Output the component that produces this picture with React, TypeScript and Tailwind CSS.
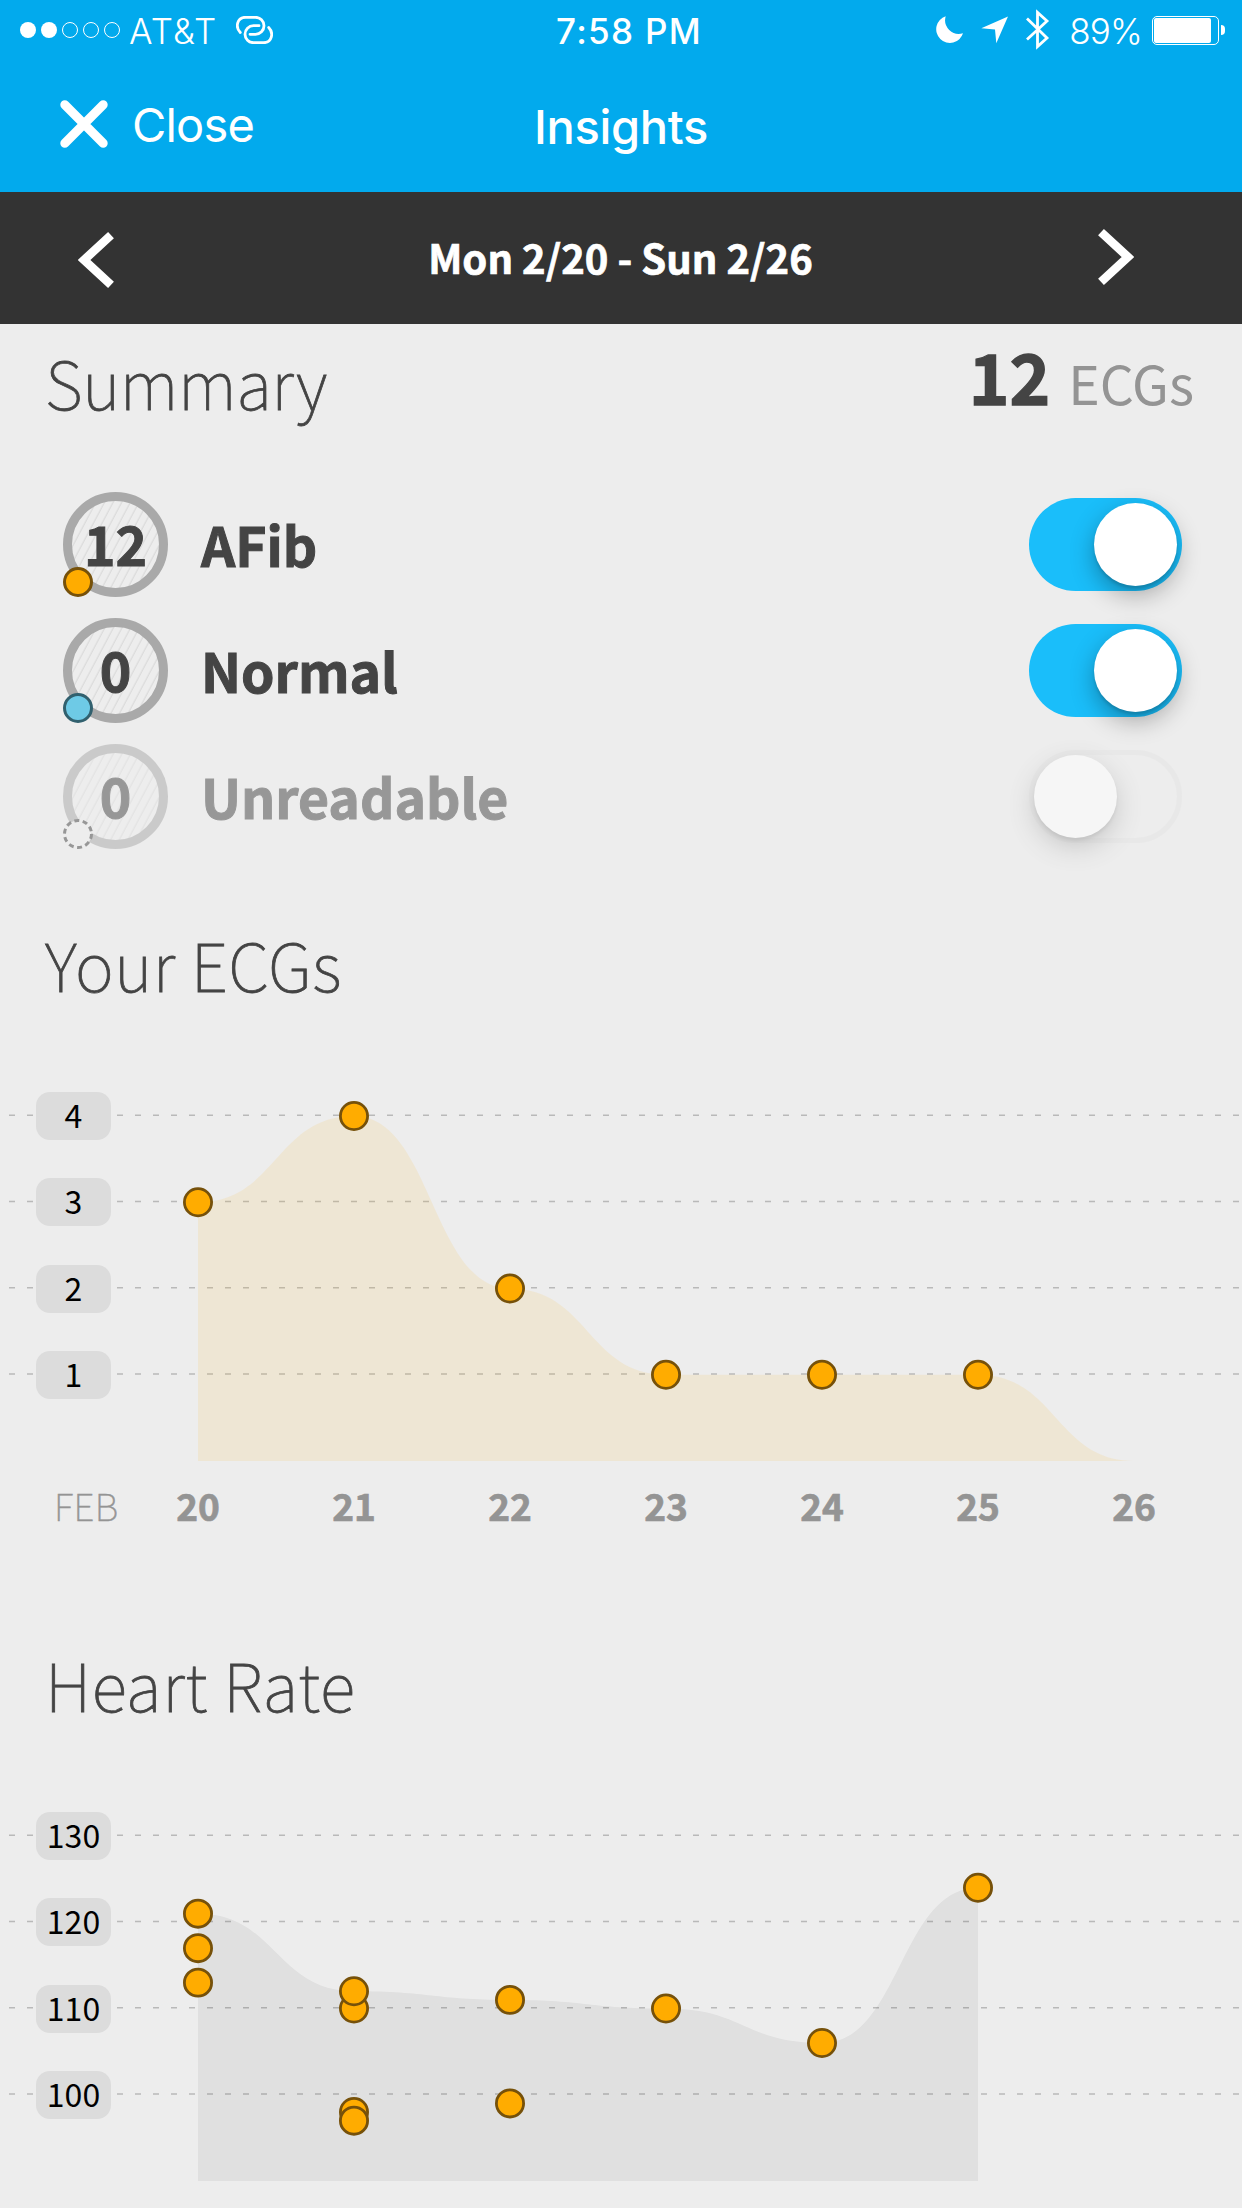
import type { ReactNode } from 'react';

const FIRST_DAY = 20;
const DAYS = [20, 21, 22, 23, 24, 25, 26];

interface Reading {
  day: number;
  value: number;
}

const ecgCounts: Reading[] = [
  { day: 20, value: 3 },
  { day: 21, value: 4 },
  { day: 22, value: 2 },
  { day: 23, value: 1 },
  { day: 24, value: 1 },
  { day: 25, value: 1 },
];

const heartRates: Reading[] = [
  { day: 20, value: 113 },
  { day: 20, value: 117 },
  { day: 20, value: 121 },
  { day: 21, value: 110 },
  { day: 21, value: 112 },
  { day: 21, value: 98 },
  { day: 21, value: 97 },
  { day: 22, value: 111 },
  { day: 22, value: 99 },
  { day: 23, value: 110 },
  { day: 24, value: 106 },
  { day: 25, value: 124 },
];

const maxHeartRates: Reading[] = [
  { day: 20, value: 121 },
  { day: 21, value: 112 },
  { day: 22, value: 111 },
  { day: 23, value: 110 },
  { day: 24, value: 106 },
  { day: 25, value: 124 },
];

const StatusBar = () => (
  <div className="grid h-[60px] grid-cols-[1fr_auto_1fr] items-center pl-5 pr-[17px] font-[Inter,sans-serif] text-[35px] leading-none">
    <div className="flex items-center">
      <div className="flex gap-[5px]">
        <span className="size-4 rounded-full bg-white" />
        <span className="size-4 rounded-full bg-white" />
        <span className="size-4 rounded-full border border-white" />
        <span className="size-4 rounded-full border border-white" />
        <span className="size-4 rounded-full border border-white" />
      </div>
      <span className="ml-[9px] mt-[3px] font-[350] tracking-[1.2px]">AT&amp;T</span>
      <svg className="ml-[18px] h-7 w-[37px]" viewBox="237 16 37 28" fill="none" stroke="currentColor" strokeWidth="2.8">
        <path d="M241.3 32.5C236 27 238 17.3 246.5 17.3H256.5A8.5 8.5 0 0 1 256.5 34.3H251" strokeLinecap="round" />
        <path d="M269.7 27.5C275 33 273 42.7 264.5 42.7H254.5A8.5 8.5 0 0 1 254.5 25.7H260" strokeLinecap="round" />
      </svg>
    </div>
    <span className="ml-[13px] mt-[3px] font-medium tracking-[1.3px]">7:58 PM</span>
    <div className="flex items-center justify-end">
      <svg className="h-7 w-7" viewBox="936 17 28 28" fill="currentColor">
        <path d="M945.7 17.2A13.7 13.7 0 1 0 963 34.3A13.8 13.8 0 0 1 945.7 17.2Z" />
      </svg>
      <svg className="ml-[17px] h-7 w-7" viewBox="981 17.5 28 28" fill="currentColor">
        <path d="M1008 18L981.3 29.7L995 31L996.3 44.7Z" />
      </svg>
      <svg className="ml-[17px] h-[42px] w-6" viewBox="1026 10 24 42" fill="none" stroke="currentColor" strokeWidth="2.8">
        <path d="M1027 19.5L1047 39L1037.5 47.6V13.5L1047 22L1027 40.5" />
      </svg>
      <span className="ml-[19px] mt-[3px] font-[350] tracking-[-0.8px]">89%</span>
      <div className="ml-[10px] flex items-center gap-[2px]">
        <div className="h-[29px] w-[67px] rounded-[5px] border border-white p-px">
          <div className="h-full w-[57px] rounded-[2px] bg-white" />
        </div>
        <span className="h-[10px] w-1 rounded-r-full bg-white" />
      </div>
    </div>
  </div>
);

const NavBar = () => (
  <div className="grid h-[132px] grid-cols-[1fr_auto_1fr] items-start px-[60px] font-[Inter,sans-serif] text-[47px] leading-[60px]">
    <button className="flex items-start pt-[36px] tracking-[-0.8px]">
      <svg className="mt-1 size-12" viewBox="0 0 48 48" stroke="currentColor" strokeWidth="9" strokeLinecap="round">
        <path d="M4.8 4.8L43.2 43.2M43.2 4.8L4.8 43.2" />
      </svg>
      <span className="ml-6 mt-[-1px]">Close</span>
    </button>
    <h1 className="pt-[37px] font-medium tracking-[-0.3px]">Insights</h1>
  </div>
);

const WeekPicker = () => (
  <div className="flex h-[132px] items-center justify-between bg-[#333] pl-[78px] pr-[108px] text-white">
    <button aria-label="Previous week">
      <svg className="mt-1 h-14 w-9" viewBox="0 0 36 56" fill="none" stroke="currentColor" strokeWidth="8.6">
        <path d="M33 3.2L6 28L33 52.8" />
      </svg>
    </button>
    <span className="ml-[29px] mt-[-2px] text-[40px] font-bold leading-[56px] [-webkit-text-stroke:0.7px]">
      Mon 2/20 - Sun 2/26
    </span>
    <button aria-label="Next week">
      <svg className="mt-[-2px] h-14 w-9" viewBox="0 0 36 56" fill="none" stroke="currentColor" strokeWidth="8.6">
        <path d="M3 3.2L30 28L3 52.8" />
      </svg>
    </button>
  </div>
);

const Toggle = ({ on }: { on: boolean }) => (
  <span
    className={
      on
        ? 'flex h-[93px] w-[153px] items-center justify-end rounded-full bg-[#1abefa] p-[5px]'
        : 'flex h-[93px] w-[153px] items-center rounded-full border-[5px] border-[#e5e5e5]'
    }
  >
    <span className="size-[83px] rounded-full bg-white shadow-[0_9px_24px_rgba(0,0,0,0.3),0_3px_3px_rgba(0,0,0,0.12)]" />
  </span>
);

interface SummaryRowProps {
  count: number;
  label: string;
  on: boolean;
  marker: ReactNode;
}

const SummaryRow = ({ count, label, on, marker }: SummaryRowProps) => (
  <div className={on ? 'flex h-[126px] items-start' : 'flex h-[126px] items-start opacity-50'}>
    <div className="relative flex size-[105px] items-center justify-center">
      <svg className="absolute inset-0" viewBox="0 0 105 105" fill="none">
        <defs>
          <pattern id="hatch" width="8.6" height="105" patternUnits="userSpaceOnUse" patternTransform="skewX(-28)">
            <path d="M4 0V105" stroke="#d6d6d6" strokeWidth="1.1" />
          </pattern>
        </defs>
        <circle cx="52.5" cy="52.5" r="48" fill="url(#hatch)" stroke="#a9a9a9" strokeWidth="9" />
        {marker}
      </svg>
      <span className="relative mt-[-3px] text-[53.5px] font-bold leading-[60px] [-webkit-text-stroke:1px]">
        {count}
      </span>
    </div>
    <span className="ml-[33px] mt-[22px] flex-1 text-[53.5px] font-bold leading-[60px] [-webkit-text-stroke:1px]">
      {label}
    </span>
    <div className="mt-[6px]">
      <Toggle on={on} />
    </div>
  </div>
);

interface ChartProps {
  ticks: number[];
  unit: number;
  area: Reading[];
  points: Reading[];
  areaClass: string;
}

const Chart = ({ ticks, unit, area, points, areaClass }: ChartProps) => {
  const x = (day: number) => 198 + (day - FIRST_DAY) * 156;
  const y = (value: number) => 24 + (ticks[0] - value) * unit;
  const base = 24 + 345;

  // Ease in and out of every reading, with flat tangents
  const curve = area
    .map((p, i) => {
      if (i === 0) return `L${x(p.day)} ${y(p.value)}`;
      const prev = area[i - 1];
      const mid = (x(prev.day) + x(p.day)) / 2;
      return `C${mid} ${y(prev.value)} ${mid} ${y(p.value)} ${x(p.day)} ${y(p.value)}`;
    })
    .join('');
  const last = area[area.length - 1];

  return (
    <div className="relative h-[369px]">
      <svg className="absolute inset-0 h-[369px] w-[1242px]" viewBox="0 0 1242 369" fill="none">
        {ticks.map((tick) => (
          <path
            key={tick}
            d={`M9 ${y(tick) - 0.8}H1242`}
            stroke="#b9b9b9"
            strokeWidth="1.5"
            strokeDasharray="6 12"
          />
        ))}
        <path className={areaClass} d={`M${x(FIRST_DAY)} ${base}${curve}L${x(last.day)} ${base}Z`} />
        {points.map((p, i) => (
          <circle key={i} cx={x(p.day)} cy={y(p.value)} r="13.6" fill="#ffac00" stroke="#76510a" strokeWidth="2.8" />
        ))}
      </svg>
      <div className="relative flex flex-col gap-[38.25px] pl-9">
        {ticks.map((tick) => (
          <span
            key={tick}
            className="h-12 w-[75px] rounded-[14px] bg-[#dcdcdc] text-center text-[32px] leading-[45px] text-black"
          >
            {tick}
          </span>
        ))}
      </div>
    </div>
  );
};

interface SectionTitleProps {
  children: ReactNode;
  className: string;
}

const SectionTitle = ({ children, className }: SectionTitleProps) => (
  <h2 className={`text-[66px] font-thin leading-[72px] [-webkit-text-stroke:0.8px] ${className}`}>{children}</h2>
);

const App = () => {
  return (
    <div className="h-[2208px] w-[1242px] overflow-hidden bg-[#ededed] font-['Noto_Sans_CJK_SC',sans-serif] text-[#444]">
      <header className="bg-[#02aaed] text-white">
        <StatusBar />
        <NavBar />
      </header>
      <WeekPicker />

      <section>
        <div className="flex h-[93px] items-start justify-between pl-[45px] pr-[48px] pt-[21px]">
          <SectionTitle className="tracking-[-0.4px]">Summary</SectionTitle>
          <div className="mt-[-6px] flex items-baseline gap-[18px] leading-[72px]">
            <span className="text-[69px] font-bold [-webkit-text-stroke:1.4px]">12</span>
            <span className="text-[53.5px] text-[#949494]">ECGs</span>
          </div>
        </div>
        <div className="pl-[63px] pr-[60px] pt-[75px]">
          <SummaryRow
            count={12}
            label="AFib"
            on
            marker={<circle cx="15" cy="90" r="13.5" fill="#ffac00" stroke="#76510a" strokeWidth="3" />}
          />
          <SummaryRow
            count={0}
            label="Normal"
            on
            marker={<circle cx="15" cy="90" r="13.5" fill="#6ecae6" stroke="#31606e" strokeWidth="3" />}
          />
          <SummaryRow
            count={0}
            label="Unreadable"
            on={false}
            marker={
              <circle cx="15" cy="90" r="13.5" fill="#ededed" stroke="#444" strokeWidth="3" strokeDasharray="5 3.5" />
            }
          />
        </div>
      </section>

      <section className="pt-[57px]">
        <div className="pl-[45px]">
          <SectionTitle className="tracking-[0.5px]">Your ECGs</SectionTitle>
        </div>
        <div className="pt-[93px]">
          <Chart
            ticks={[4, 3, 2, 1]}
            unit={86.25}
            area={[...ecgCounts, { day: 26, value: 0 }]}
            points={ecgCounts}
            areaClass="fill-[#ffac00]/10"
          />
        </div>
        <div className="flex h-[72px] pt-[17px] text-[37px] leading-[54px] text-[#949494]">
          <span className="w-[120px] pl-[54px] font-thin tracking-[0.4px] [-webkit-text-stroke:0.5px]">FEB</span>
          {DAYS.map((day) => (
            <span key={day} className="w-[156px] text-center font-bold [-webkit-text-stroke:0.7px]">
              {day}
            </span>
          ))}
        </div>
      </section>

      <section className="pt-[114px]">
        <div className="pl-[45px]">
          <SectionTitle className="tracking-[0.7px]">Heart Rate</SectionTitle>
        </div>
        <div className="pt-[93px]">
          <Chart
            ticks={[130, 120, 110, 100]}
            unit={8.625}
            area={maxHeartRates}
            points={heartRates}
            areaClass="fill-black/[0.055]"
          />
        </div>
      </section>
    </div>
  );
};

export default App;
